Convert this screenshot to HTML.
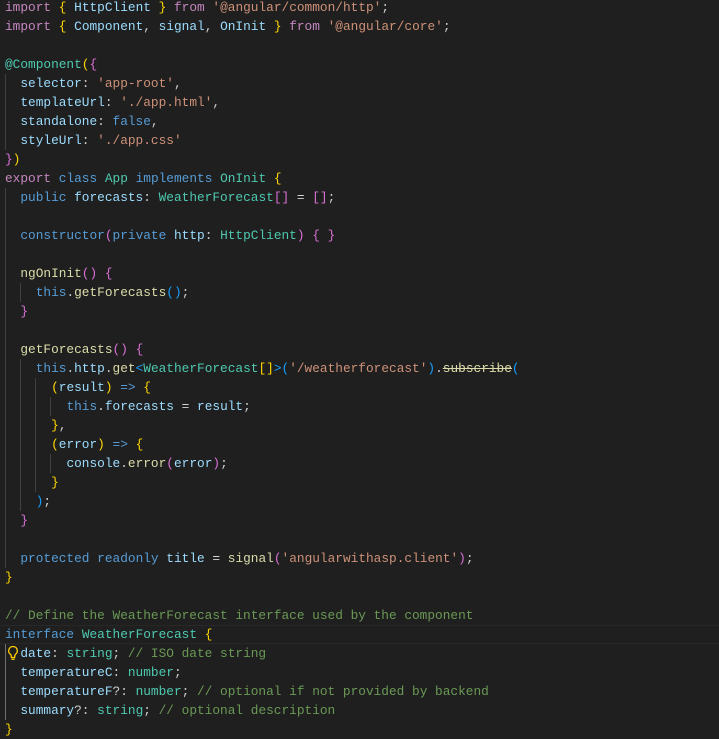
<!DOCTYPE html>
<html><head><meta charset="utf-8"><style>
html,body{margin:0;padding:0;background:#1f1f1f;width:719px;height:739px;overflow:hidden}
pre{margin:0;position:absolute;top:-2.5px;left:5px;font-family:"Liberation Mono",monospace;font-size:12.8px;line-height:19px;color:#cccccc;white-space:pre}
.k{color:#c586c0}.b{color:#569cd6}.v{color:#9cdcfe}.s{color:#ce9178}.t{color:#4ec9b0}.f{color:#dcdcaa}.c{color:#6a9955}
.y{color:#ffd700}.p{color:#da70d6}.u{color:#179fff}.o{color:#d4d4d4}
.st{text-decoration:line-through}
.g{position:absolute;width:1px;background:#404040}
.hl{position:absolute;left:0;width:719px;top:625px;height:19px;border-top:1px solid #282828;border-bottom:1px solid #282828;box-sizing:border-box}
</style></head><body>
<div class="hl"></div>
<div class="g" style="left:5px;top:74px;height:76px"></div>
<div class="g" style="left:5px;top:188px;height:380px"></div>
<div class="g" style="left:20px;top:283px;height:19px"></div>
<div class="g" style="left:20px;top:359px;height:152px"></div>
<div class="g" style="left:35px;top:378px;height:114px"></div>
<div class="g" style="left:50px;top:397px;height:19px"></div>
<div class="g" style="left:50px;top:454px;height:19px"></div>
<div class="g" style="left:5px;top:644px;height:76px;background:#707070"></div>
<pre><span class="k">import</span> <span class="y">{</span> <span class="v">HttpClient</span> <span class="y">}</span> <span class="k">from</span> <span class="s">'@angular/common/http'</span>;
<span class="k">import</span> <span class="y">{</span> <span class="v">Component</span>, <span class="v">signal</span>, <span class="v">OnInit</span> <span class="y">}</span> <span class="k">from</span> <span class="s">'@angular/core'</span>;

<span class="t">@Component</span><span class="y">(</span><span class="p">{</span>
  <span class="v">selector</span>: <span class="s">'app-root'</span>,
  <span class="v">templateUrl</span>: <span class="s">'./app.html'</span>,
  <span class="v">standalone</span>: <span class="b">false</span>,
  <span class="v">styleUrl</span>: <span class="s">'./app.css'</span>
<span class="p">}</span><span class="y">)</span>
<span class="k">export</span> <span class="b">class</span> <span class="t">App</span> <span class="b">implements</span> <span class="t">OnInit</span> <span class="y">{</span>
  <span class="b">public</span> <span class="v">forecasts</span>: <span class="t">WeatherForecast</span><span class="p">[]</span> <span class="o">=</span> <span class="p">[]</span>;

  <span class="b">constructor</span><span class="p">(</span><span class="b">private</span> <span class="v">http</span>: <span class="t">HttpClient</span><span class="p">)</span> <span class="p">{</span> <span class="p">}</span>

  <span class="f">ngOnInit</span><span class="p">()</span> <span class="p">{</span>
    <span class="b">this</span>.<span class="f">getForecasts</span><span class="u">()</span>;
  <span class="p">}</span>

  <span class="f">getForecasts</span><span class="p">()</span> <span class="p">{</span>
    <span class="b">this</span>.<span class="v">http</span>.<span class="f">get</span><span class="u">&lt;</span><span class="t">WeatherForecast</span><span class="y">[]</span><span class="u">&gt;(</span><span class="s">'/weatherforecast'</span><span class="u">)</span>.<span class="f st">subscribe</span><span class="u">(</span>
      <span class="y">(</span><span class="v">result</span><span class="y">)</span> <span class="b">=&gt;</span> <span class="y">{</span>
        <span class="b">this</span>.<span class="v">forecasts</span> <span class="o">=</span> <span class="v">result</span>;
      <span class="y">}</span>,
      <span class="y">(</span><span class="v">error</span><span class="y">)</span> <span class="b">=&gt;</span> <span class="y">{</span>
        <span class="v">console</span>.<span class="f">error</span><span class="p">(</span><span class="v">error</span><span class="p">)</span>;
      <span class="y">}</span>
    <span class="u">)</span>;
  <span class="p">}</span>

  <span class="b">protected</span> <span class="b">readonly</span> <span class="v">title</span> <span class="o">=</span> <span class="f">signal</span><span class="p">(</span><span class="s">'angularwithasp.client'</span><span class="p">)</span>;
<span class="y">}</span>

<span class="c">// Define the WeatherForecast interface used by the component</span>
<span class="b">interface</span> <span class="t">WeatherForecast</span> <span class="y">{</span>
  <span class="v">date</span>: <span class="t">string</span>; <span class="c">// ISO date string</span>
  <span class="v">temperatureC</span>: <span class="t">number</span>;
  <span class="v">temperatureF</span>?: <span class="t">number</span>; <span class="c">// optional if not provided by backend</span>
  <span class="v">summary</span>?: <span class="t">string</span>; <span class="c">// optional description</span>
<span class="y">}</span></pre>
<svg style="position:absolute;left:7px;top:645px" width="12" height="17" viewBox="0 0 12 17"><path d="M6 1.5a4.3 4.3 0 0 0-2.6 7.7c.6.5.9 1.2.9 2v1.3h3.4v-1.3c0-.8.3-1.5.9-2A4.3 4.3 0 0 0 6 1.5z" fill="none" stroke="#ffcc00" stroke-width="1.3"/><path d="M4.4 14.3h3.2" stroke="#ffcc00" stroke-width="1.3"/></svg>
</body></html>
